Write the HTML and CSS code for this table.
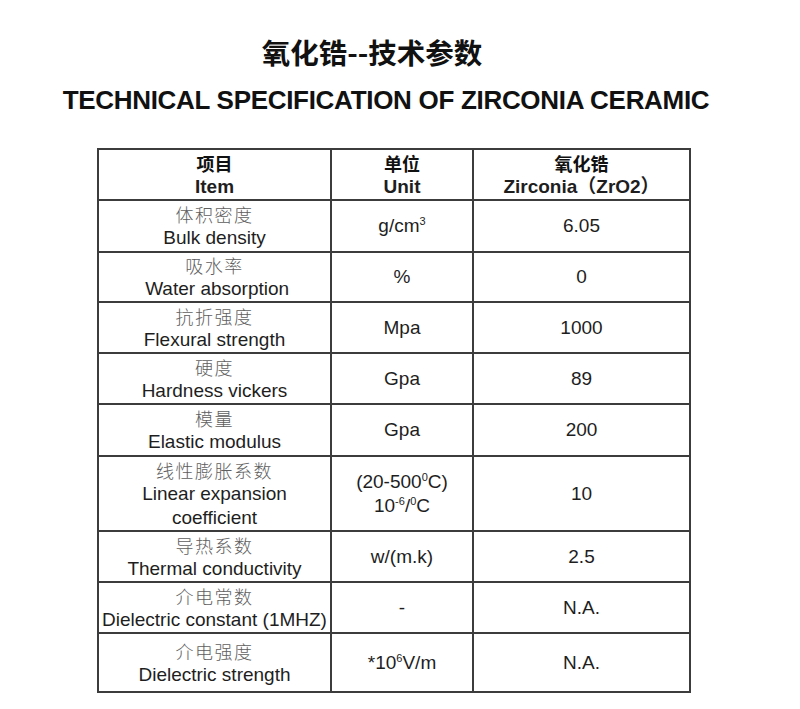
FILE: index.html
```html
<!DOCTYPE html>
<html lang="zh">
<head>
<meta charset="utf-8">
<title>氧化锆--技术参数</title>
<link rel="stylesheet" href="styles.css">
</head>
<body>
<div class="page">
  <h1 class="title-cn">氧化锆--技术参数</h1>
  <h2 class="title-en">TECHNICAL SPECIFICATION OF ZIRCONIA CERAMIC</h2>
  <table class="spec">
    <colgroup>
      <col class="c1"><col class="c2"><col class="c3">
    </colgroup>
    <tr class="head r51">
      <th><span class="cn">项目</span>Item</th>
      <th><span class="cn">单位</span>Unit</th>
      <th><span class="cn">氧化锆</span>Zirconia（ZrO2）</th>
    </tr>
    <tr class="r52">
      <td><span class="cn">体积密度</span>Bulk density</td>
      <td>g/cm<sup>3</sup></td>
      <td>6.05</td>
    </tr>
    <tr class="r50">
      <td><span class="cn">吸水率</span>&nbsp;Water absorption</td>
      <td>%</td>
      <td>0</td>
    </tr>
    <tr class="r51">
      <td><span class="cn">抗折强度</span>Flexural strength</td>
      <td>Mpa</td>
      <td>1000</td>
    </tr>
    <tr class="r51">
      <td><span class="cn">硬度</span>Hardness vickers</td>
      <td>Gpa</td>
      <td>89</td>
    </tr>
    <tr class="r52">
      <td><span class="cn">模量</span>Elastic modulus</td>
      <td>Gpa</td>
      <td>200</td>
    </tr>
    <tr class="r75">
      <td><span class="cn">线性膨胀系数</span>Linear expansion<br>coefficient</td>
      <td>(20-500<sup>0</sup>C)<br>10<sup>-6</sup>/<sup>0</sup>C</td>
      <td>10</td>
    </tr>
    <tr class="r51">
      <td><span class="cn">导热系数</span>Thermal conductivity</td>
      <td>w/(m.k)</td>
      <td>2.5</td>
    </tr>
    <tr class="r51">
      <td><span class="cn">介电常数</span>Dielectric constant (1MHZ)</td>
      <td>-</td>
      <td>N.A.</td>
    </tr>
    <tr class="r59">
      <td><span class="cn">介电强度</span>Dielectric strength</td>
      <td>*10<sup>6</sup>V/m</td>
      <td>N.A.</td>
    </tr>
  </table>
</div>
</body>
</html>
```

FILE: styles.css
```css
html, body {
  margin: 0;
  padding: 0;
  background: #ffffff;
}

.page {
  width: 800px;
  padding-top: 33px;
  font-family: "Liberation Sans", Arial, "Noto Sans CJK SC", sans-serif;
  color: #1e1e1e;
}

.title-cn {
  margin: 0;
  padding-right: 56px;
  text-align: center;
  font-family: "Noto Sans CJK SC", sans-serif;
  font-weight: 700;
  font-size: 28.5px;
  line-height: 38px;
  color: #111;
}

.title-en {
  margin: 14px 0 0 0;
  padding-right: 28px;
  text-align: center;
  font-weight: 700;
  font-size: 26px;
  line-height: 30px;
  color: #111;
  letter-spacing: -0.3px;
}

.spec {
  margin: 33px 0 0 97px;
  border-collapse: collapse;
  table-layout: fixed;
  width: 592px;
  font-size: 19px;
}

.c1 { width: 233px; }
.c2 { width: 142px; }
.c3 { width: 217px; }

.spec th,
.spec td {
  border: 2px solid #3c3c3c;
  padding: 0;
  text-align: center;
  vertical-align: middle;
  line-height: 24px;
  color: #1e1e1e;
  white-space: nowrap;
}

.spec th {
  font-weight: 700;
  font-size: 19px;
}

.spec .cn {
  display: block;
  height: 24px;
  line-height: 24px;
  font-family: "Noto Sans CJK SC", sans-serif;
}

.spec td .cn {
  font-weight: 300;
  font-size: 18px;
  color: #5e5e5e;
  letter-spacing: 1.5px;
}

.spec th .cn {
  font-weight: 700;
  font-size: 18px;
  color: #111;
}

.spec sup {
  font-size: 11px;
  line-height: 0;
  vertical-align: 7px;
}

.r50 { height: 50px; }
.r51 { height: 51px; }
.r52 { height: 52px; }
.r59 { height: 59px; }
.r75 { height: 75px; }
```
